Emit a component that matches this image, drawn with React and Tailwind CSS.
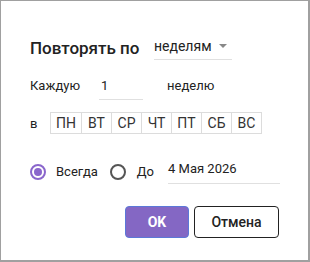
import React from "react";

const days = ["ПН", "ВТ", "СР", "ЧТ", "ПТ", "СБ", "ВС"];

export default function App() {
  return (
    <div
      className="w-[310px] h-[262px] bg-white border border-[#a0a0a0] border-r-2 border-b-2 box-border text-[#222] relative"
      style={{ fontFamily: "Roboto, 'Noto Sans', sans-serif" }}
    >
      <div className="pl-[29px] pt-[31px]">
        <div className="flex items-start">
          <div className="text-[17px] font-medium leading-[20px] pt-[6px] w-[124px]">Повторять по</div>
          <div className="w-[78px] h-[28px] border-b border-[#e0e0e0] flex items-center">
            <span className="text-[14px] leading-[20px]">неделям</span>
            <span className="ml-[7px] w-0 h-0 border-l-[4px] border-r-[4px] border-t-[4px] border-l-transparent border-r-transparent border-t-[#888]" />
          </div>
        </div>
        <div className="flex items-start mt-[13px]">
          <div className="text-[13px] leading-[16px] pt-[5px] w-[69px]">Каждую</div>
          <div className="w-[44px] h-[27px] border-b border-[#e0e0e0] text-[13px] leading-[16px] pt-[5px] pl-[2px]">1</div>
          <div className="text-[13px] leading-[16px] pt-[5px] ml-[24px]">неделю</div>
        </div>
        <div className="flex items-center mt-[12px]">
          <div className="text-[13px] w-[20px] pt-[2px]">в</div>
          <div className="flex border border-[#dcdcdc] h-[22px]">
            {days.map((d, i) => (
              <div
                key={d}
                className={
                  "w-[30px] flex items-center justify-center text-[14px] leading-none text-[#333] " +
                  (i > 0 ? "border-l border-[#dcdcdc]" : "")
                }
              >
                {d}
              </div>
            ))}
          </div>
        </div>
        <div className="flex items-center mt-[26px] text-[13px]">
          <span className="w-[16px] h-[16px] rounded-full border-2 border-[#8a66cc] flex items-center justify-center">
            <span className="w-[8px] h-[8px] rounded-full bg-[#8a66cc]" />
          </span>
          <span className="ml-[10px]">Всегда</span>
          <span className="ml-[12px] w-[16px] h-[16px] rounded-full border-2 border-[#555]" />
          <span className="ml-[11px]">До</span>
          <div className="ml-[14px] w-[112px] h-[24px] border-b border-[#e0e0e0] leading-[18px]">4 Мая 2026</div>
        </div>
        <div className="flex justify-end mt-[22px] pr-[29px] gap-[5px]">
          <button className="w-[64px] h-[32px] rounded-[4px] bg-[#8467c4] border border-[#5b78d8] text-white font-bold text-[14px]">
            OK
          </button>
          <button className="w-[85px] h-[32px] rounded-[4px] border border-[#222] bg-white text-[14px] font-medium">
            Отмена
          </button>
        </div>
      </div>
    </div>
  );
}
